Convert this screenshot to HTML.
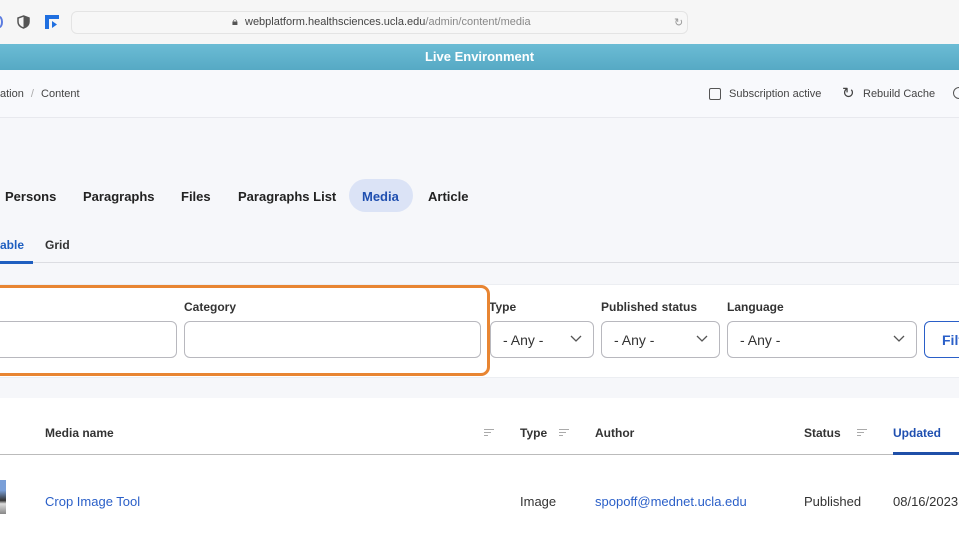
<!DOCTYPE html>
<html><head><style>
*{margin:0;padding:0;box-sizing:border-box}
body{width:959px;height:540px;overflow:hidden;background:#f6f7fa;font-family:"Liberation Sans",sans-serif;position:relative;color:#222}
.a{position:absolute}
.sel{position:absolute;top:321px;height:37px;border:1px solid #b8b8be;border-radius:6px;background:#fff;font-size:14px;color:#333;padding:10px 0 0 12px}
.sel svg{position:absolute;right:11px;top:13px}
.lbl{position:absolute;top:300px;font-size:12px;font-weight:bold;color:#333}
.tab{position:absolute;top:189px;font-size:13px;font-weight:bold;color:#222}
.th{position:absolute;top:426px;font-size:12px;font-weight:bold;color:#333}
.sort{position:absolute;top:429px;width:10px}
.sort i{display:block;height:1px;background:#aaa;margin-bottom:2px}
</style></head><body>
<div class="a" style="left:0;top:0;width:959px;height:44px;background:#f6f6f6"></div>
<div class="a" style="left:-4px;top:16px;width:7px;height:12px;border:2px solid #5a7be0;border-radius:50%"></div>
<svg class="a" style="left:17px;top:15px" width="13" height="14"><path d="M6.5 1 L12 3 V7 C12 10 9.5 12 6.5 13 C3.5 12 1 10 1 7 V3Z" fill="none" stroke="#555" stroke-width="1.5"/><path d="M6.5 1 L12 3 V7 C12 10 9.5 12 6.5 13Z" fill="#555"/></svg>
<svg class="a" style="left:45px;top:15px" width="14" height="14"><path d="M0 0H14V4H4V14H0Z" fill="#1f6fe0"/><path d="M7 6L12 9.5L7 13Z" fill="#1f6fe0"/></svg>
<div class="a" style="left:71px;top:11px;width:617px;height:23px;border:1px solid #e4e4e4;border-radius:6px;background:#f7f7f7"></div>
<div class="a" style="left:232px;top:16px;font-size:11px;color:#555">&#128274;&#xFE0E;</div>
<div class="a" style="left:245px;top:16px;font-size:11px;color:#444">webplatform.healthsciences.ucla.edu<span style="color:#888">/admin/content/media</span></div>
<div class="a" style="left:674px;top:16px;font-size:11px;color:#999">↻</div>
<div class="a" style="left:0;top:44px;width:959px;height:26px;background:linear-gradient(#6bbcd5,#56a9c4)"></div>
<div class="a" style="left:0;top:49px;width:959px;text-align:center;font-size:13px;font-weight:bold;color:#fff">Live Environment</div>
<div class="a" style="left:0;top:70px;width:959px;height:48px;background:#f8f9fc;border-bottom:1px solid #e8e9ee"></div>
<div class="a" style="left:0;top:88px;font-size:11px;color:#444">ation <span style="color:#aaa;margin:0 4px">/</span> Content</div>
<div class="a" style="left:709px;top:88px;width:12px;height:12px;border:1.5px solid #555;border-radius:2px"></div>
<div class="a" style="left:729px;top:88px;font-size:11px;color:#444">Subscription active</div>
<div class="a" style="left:842px;top:84px;font-size:15px;color:#444">↻</div>
<div class="a" style="left:863px;top:88px;font-size:11px;color:#444">Rebuild Cache</div>
<div class="a" style="left:953px;top:87px;width:12px;height:12px;border:1.5px solid #555;border-radius:50%"></div>
<div class="tab" style="left:5px">Persons</div>
<div class="tab" style="left:83px">Paragraphs</div>
<div class="tab" style="left:181px">Files</div>
<div class="tab" style="left:238px">Paragraphs List</div>
<div class="a" style="left:349px;top:179px;width:64px;height:33px;border-radius:17px;background:#dbe3f6"></div>
<div class="tab" style="left:362px;color:#1f4fb0">Media</div>
<div class="tab" style="left:428px">Article</div>
<div class="a" style="left:0;top:238px;font-size:12px;font-weight:bold;color:#1f5fc0">able</div>
<div class="a" style="left:45px;top:238px;font-size:12px;font-weight:bold;color:#333">Grid</div>
<div class="a" style="left:0;top:262px;width:959px;height:1px;background:#dcdde2"></div>
<div class="a" style="left:0;top:261px;width:33px;height:3px;background:#1f5fc0"></div>
<div class="a" style="left:0;top:284px;width:959px;height:94px;background:#fff;border-top:1px solid #eceef2;border-bottom:1px solid #eceef2"></div>
<div class="lbl" style="left:184px">Category</div>
<div class="lbl" style="left:489px">Type</div>
<div class="lbl" style="left:601px">Published status</div>
<div class="lbl" style="left:727px">Language</div>
<div class="sel" style="left:-10px;width:187px"></div>
<div class="sel" style="left:184px;width:297px"></div>
<div class="sel" style="left:490px;width:104px">- Any -<svg width="12" height="8"><path d="M1 1L6 6L11 1" fill="none" stroke="#555" stroke-width="1.3"/></svg></div>
<div class="sel" style="left:601px;width:119px">- Any -<svg width="12" height="8"><path d="M1 1L6 6L11 1" fill="none" stroke="#555" stroke-width="1.3"/></svg></div>
<div class="sel" style="left:727px;width:190px">- Any -<svg width="12" height="8"><path d="M1 1L6 6L11 1" fill="none" stroke="#555" stroke-width="1.3"/></svg></div>
<div class="sel" style="left:924px;width:60px;border:1.5px solid #2a5fc8;color:#2a5fc8;font-weight:bold;padding-left:17px">Filt</div>
<div class="a" style="left:-10px;top:285px;width:500px;height:91px;border:3px solid #e88532;border-radius:9px"></div>
<div class="a" style="left:0;top:398px;width:959px;height:142px;background:#fff"></div>
<div class="th" style="left:45px">Media name</div>
<div class="sort" style="left:484px"><i></i><i style="width:7px"></i><i style="width:4px"></i></div>
<div class="th" style="left:520px">Type</div>
<div class="sort" style="left:559px"><i></i><i style="width:7px"></i><i style="width:4px"></i></div>
<div class="th" style="left:595px">Author</div>
<div class="th" style="left:804px">Status</div>
<div class="sort" style="left:857px"><i></i><i style="width:7px"></i><i style="width:4px"></i></div>
<div class="th" style="left:893px;color:#1f4fb0">Updated</div>
<div class="a" style="left:0;top:454px;width:959px;height:1px;background:#bbb"></div>
<div class="a" style="left:893px;top:452px;width:66px;height:3px;background:#1f4fa8"></div>
<div class="a" style="left:0;top:480px;width:6px;height:34px;background:linear-gradient(#7a9fd8 30%,#333 60%,#ddd 70%,#888)"></div>
<div class="a" style="left:45px;top:494px;font-size:13px;color:#2a5fc8">Crop Image Tool</div>
<div class="a" style="left:520px;top:494px;font-size:13px;color:#333">Image</div>
<div class="a" style="left:595px;top:494px;font-size:13px;color:#2a5fc8">spopoff@mednet.ucla.edu</div>
<div class="a" style="left:804px;top:494px;font-size:13px;color:#333">Published</div>
<div class="a" style="left:893px;top:494px;font-size:13px;color:#333;white-space:nowrap">08/16/2023</div>
</body></html>
